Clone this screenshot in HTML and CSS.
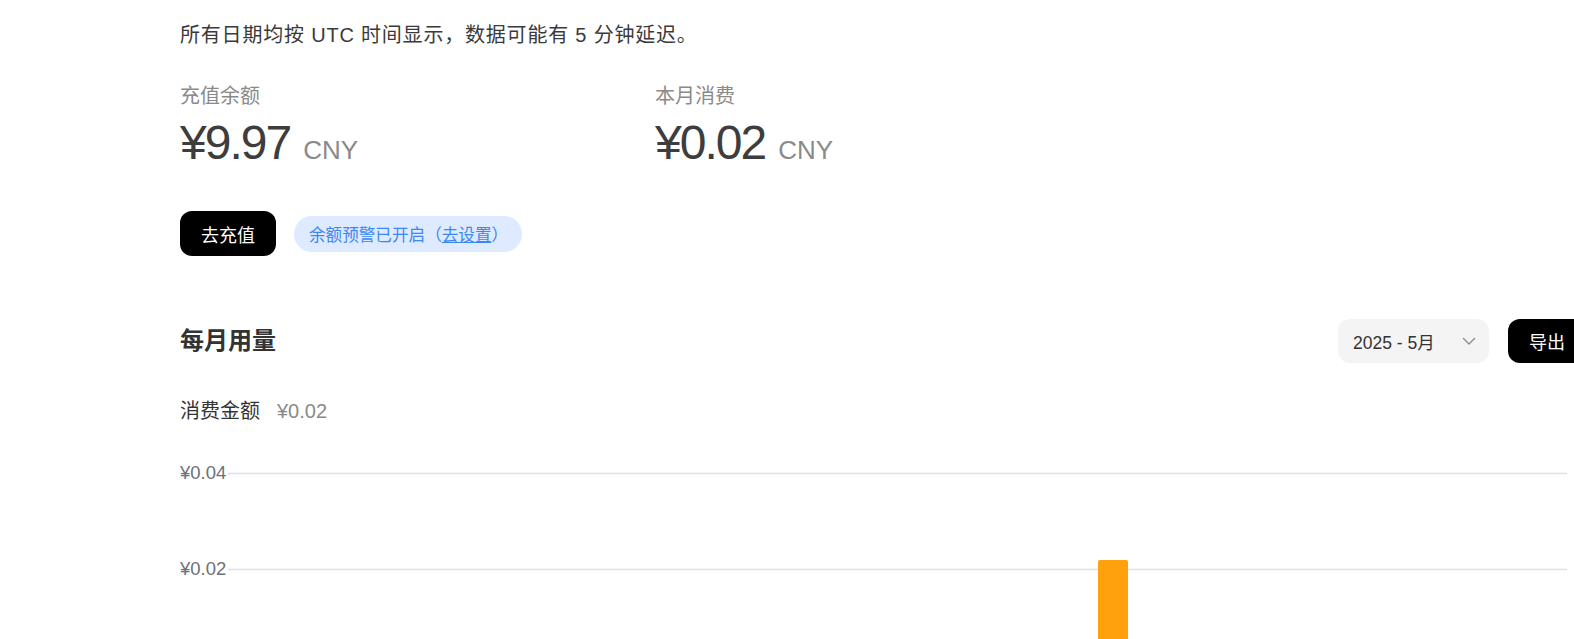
FILE: index.html
```html
<!DOCTYPE html>
<html lang="zh-CN">
<head>
    <meta charset="UTF-8">
    <meta name="viewport" content="width=device-width, initial-scale=1.0">
    <title>用量信息</title>
    <link rel="stylesheet" href="styles.css">
</head>
<body>
    <div class="main">
        <p class="note">所有日期均按 UTC 时间显示，数据可能有 5 分钟延迟。</p>

        <div class="stats">
            <div class="stat">
                <div class="stat-label">充值余额</div>
                <div class="stat-value">¥9.97<span class="unit">CNY</span></div>
            </div>
            <div class="stat">
                <div class="stat-label">本月消费</div>
                <div class="stat-value">¥0.02<span class="unit">CNY</span></div>
            </div>
        </div>

        <div class="actions">
            <button class="btn-black">去充值</button>
            <span class="badge">余额预警已开启（<a href="#">去设置</a>）</span>
        </div>

        <div class="section-head">
            <h2>每月用量</h2>
            <div class="tools">
                <div class="select">
                    <span>2025 - 5月</span>
                    <svg width="16" height="16" viewBox="0 0 16 16"><path d="M2.5 5.5 L8 11 L13.5 5.5" fill="none" stroke="#8c8c8c" stroke-width="1.4" stroke-linecap="round" stroke-linejoin="round"/></svg>
                </div>
                <button class="btn-black btn-export">导出</button>
            </div>
        </div>

        <div class="chart-title">消费金额<span class="chart-total">¥0.02</span></div>

        <!-- 图表 -->
        <svg class="chart" width="1394" height="220" viewBox="0 0 1394 220">
            <text class="axis-label" x="0" y="52">¥0.04</text>
            <text class="axis-label" x="0" y="148">¥0.02</text>
            <line x1="48" y1="46.5" x2="1387" y2="46.5" stroke="#dcdfee" stroke-width="1.5"/>
            <line x1="48" y1="142.5" x2="1387" y2="142.5" stroke="#dcdfee" stroke-width="1.5"/>
            <path d="M918 135 a2 2 0 0 1 2 -2 h26 a2 2 0 0 1 2 2 V220 H918 Z" fill="#ffa00c"/>
        </svg>
    </div>
</body>
</html>
```

FILE: styles.css
```css
body {
    margin: 0;
    font-family: "Liberation Sans", "Noto Sans CJK SC", sans-serif;
    color: #333;
    background-color: #fff;
    overflow: hidden;
}

.main {
    width: 1406px;
    padding: 20px 0 0 180px;
}

.note {
    margin: 0;
    font-size: 20px;
    line-height: 30px;
    letter-spacing: 0.8px;
    color: #3a3a3a;
}

.stats {
    display: flex;
    margin-top: 31px;
}

.stat {
    width: 475px;
}

.stat-label {
    font-size: 20px;
    line-height: 30px;
    color: #8a8a8a;
}

.stat-value {
    margin-top: 4px;
    font-size: 48px;
    line-height: 56px;
    letter-spacing: -2px;
    color: #3d3d3d;
}

.unit {
    margin-left: 13px;
    font-size: 26px;
    letter-spacing: 0;
    color: #8a8a8a;
}

.actions {
    display: flex;
    align-items: center;
    gap: 18px;
    margin-top: 33px;
}

.btn-black {
    height: 45px;
    padding: 0 21px;
    border: none;
    border-radius: 12px;
    background-color: #000;
    color: #fff;
    font-family: inherit;
    font-size: 18px;
    cursor: pointer;
}

.badge {
    display: inline-flex;
    align-items: center;
    height: 36px;
    padding: 0 14px 0 15px;
    border-radius: 18px;
    background-color: #deeaff;
    color: #3d86f5;
    font-size: 16.6px;
}

.badge a {
    color: #3d86f5;
}

.section-head {
    display: flex;
    justify-content: space-between;
    align-items: center;
    margin-top: 63px;
}

.section-head h2 {
    margin: 0;
    font-size: 24px;
    line-height: 30px;
    font-weight: bold;
    color: #333;
}

.tools {
    display: flex;
    align-items: center;
    gap: 19px;
}

.select {
    display: flex;
    align-items: center;
    justify-content: space-between;
    width: 151px;
    height: 44px;
    box-sizing: border-box;
    padding: 0 12px 0 15px;
    border-radius: 12px;
    background-color: #f4f4f4;
    font-size: 17.5px;
    color: #333;
}

.btn-export {
    height: 44px;
    padding: 0 21px;
    font-size: 18px;
}

.chart-title {
    margin-top: 33px;
    font-size: 20px;
    line-height: 30px;
    color: #333;
}

.chart-total {
    margin-left: 17px;
    font-size: 20px;
    color: #8a8a8a;
}

.chart {
    display: block;
    margin-top: 1px;
}

.axis-label {
    font-family: "Liberation Sans", sans-serif;
    font-size: 18.5px;
    fill: #6e7079;
}
```
